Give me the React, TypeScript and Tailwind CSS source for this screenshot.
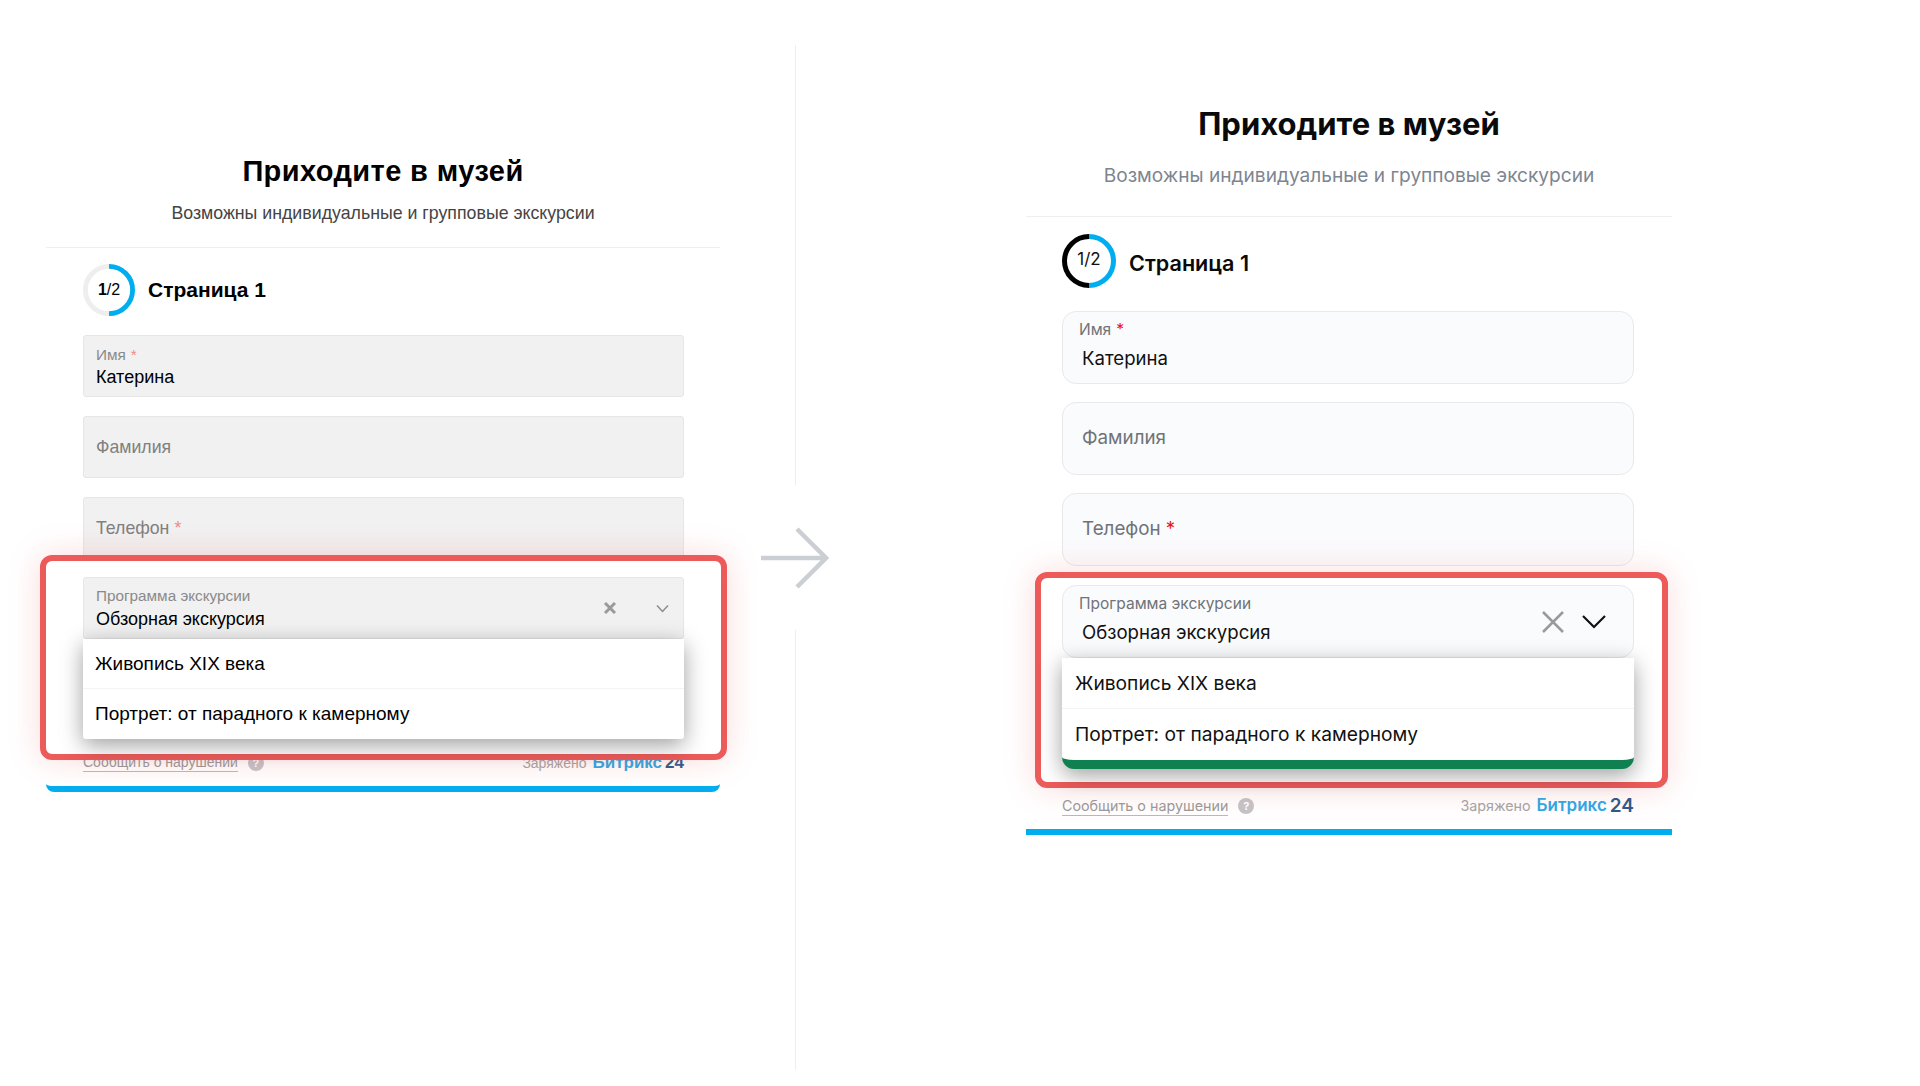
import type { ReactNode } from 'react'

const LEFT_FONT = 'font-["Liberation_Sans",Arial,sans-serif]'

function Ring({ track, size = 54 }: { track: string; size?: number }) {
  return (
    <svg width={size} height={size} viewBox="0 0 54 54" fill="none" className="shrink-0">
      <path d="M27 2.5a24.5 24.5 0 0 0 0 49" stroke={track} strokeWidth="5" />
      <path d="M27 2.5a24.5 24.5 0 0 1 0 49" stroke="#00aeef" strokeWidth="5" />
    </svg>
  )
}

function Star({ color }: { color: string }) {
  return <span className={`ml-[5px] ${color}`}>*</span>
}

function OldField({ label, value, star, className }: { label: string; value?: string; star?: boolean; className?: string }) {
  return (
    <div className={`h-[62px] rounded-[3px] border border-[#e6e6e6] bg-[#f1f1f1] pl-3 ${className ?? ''}`}>
      {value ? (
        <div className="flex h-full flex-col pt-[11px]">
          <div className="text-[15.3px] leading-[16px] text-[#8a8a8a]">
            {label}
            {star && <Star color="text-[#f08a8a]" />}
          </div>
          <div className="mt-[1px] text-[18px] leading-[26px] text-black">{value}</div>
        </div>
      ) : (
        <div className="flex h-full items-center text-[17.7px] text-[#808080]">
          <span>
            {label}
            {star && <Star color="text-[#f08a8a]" />}
          </span>
        </div>
      )}
    </div>
  )
}

function NewField({ label, value, star }: { label: string; value?: string; star?: boolean }) {
  return (
    <div className="h-[73px] rounded-[14px] border border-[#e8e9ed] bg-[#fafbfd] pl-4">
      {value ? (
        <div className="flex h-full flex-col pt-[8px]">
          <div className="text-[15.5px] leading-[20px] text-[#6f7378]">
            {label}
            {star && <Star color="text-[#f01010]" />}
          </div>
          <div className="mt-[6px] pl-[3px] text-[18.6px] leading-[24px] text-[#111]">{value}</div>
        </div>
      ) : (
        <div className="flex h-full items-center pl-[3px] text-[18.8px] text-[#6f7378]">
          <span>
            {label}
            {star && <Star color="text-[#f01010]" />}
          </span>
        </div>
      )}
    </div>
  )
}

function RedBox({ className, children }: { className: string; children: ReactNode }) {
  return (
    <div className={`relative z-10 rounded-[12px] border-[6px] border-[#ed5a5a] bg-white shadow-[0_0_32px_rgba(237,90,90,0.22)] ${className}`}>
      {children}
    </div>
  )
}

function HelpDot({ size }: { size: string }) {
  return (
    <span className={`flex items-center justify-center rounded-full bg-[#c4c4c8] font-bold text-white ${size}`}>?</span>
  )
}

function OldCard() {
  return (
    <div className={`w-[674px] ${LEFT_FONT}`}>
      <div className="rounded-b-[8px] border-b-[6px] border-[#00aeef] pb-[13px]">
        <div className="border-b border-[#efefef] pb-[22px] pt-[153px] text-center">
          <h1 className="text-[29px] font-bold leading-[36px] tracking-[0.4px] text-black">Приходите в музей</h1>
          <p className="mt-[12px] text-[17.75px] leading-[24px] text-[#444]">Возможны индивидуальные и групповые экскурсии</p>
        </div>
        <div className="pl-[37px] pr-[36px] pt-[15px]">
          <div className="flex h-[54px] items-center gap-[13px]">
            <div className="relative">
              <Ring track="#eeeeee" size={52} />
              <span className="absolute inset-0 flex items-center justify-center text-[16px] text-black">
                <b className="font-bold">1</b>/2
              </span>
            </div>
            <span className="text-[21px] font-bold text-black">Страница 1</span>
          </div>
          <div className="mt-[18px] flex flex-col gap-[19px]">
            <OldField label="Имя" value="Катерина" star />
            <OldField label="Фамилия" />
            <OldField label="Телефон" star />
          </div>
          <RedBox className="-mx-[43px] -mt-[4px] px-[37px] pb-[15px] pt-[16px]">
            <div className="flex h-[62px] items-center rounded-[3px] border border-[#e6e6e6] bg-[#f1f1f1] pl-3 pr-[14px]">
              <div className="flex-1">
                <div className="mt-[3px] text-[15.3px] leading-[16px] text-[#8a8a8a]">Программа экскурсии</div>
                <div className="mt-[2px] text-[18px] leading-[26px] text-black">Обзорная экскурсия</div>
              </div>
              <svg width="12" height="12" viewBox="0 0 12 12" className="mr-[40px]" stroke="#9a9a9a" strokeWidth="3">
                <path d="M1 1l10 10M11 1L1 11" />
              </svg>
              <svg width="13" height="9" viewBox="0 0 13 9" fill="none" stroke="#8c8c8c" strokeWidth="1.5">
                <path d="M1 1.5l5.5 6 5.5-6" />
              </svg>
            </div>
            <div className="relative rounded-b-[3px] bg-white shadow-[0_6px_22px_rgba(0,0,0,0.38)]">
              <div className="flex h-[50px] items-center border-b border-[#f4f4f4] pl-3 pt-[1px] text-[19px] text-black">Живопись XIX века</div>
              <div className="flex h-[50px] items-center pl-3 text-[19px] text-black">Портрет: от парадного к камерному</div>
            </div>
          </RedBox>
          <div className="-mt-[7px] flex h-[20px] items-center text-[14px]">
            <span className="border-b border-[#b9b9b9] leading-[17px] text-[#9a9a9a]">Сообщить о нарушении</span>
            <span className="ml-[10px]"><HelpDot size="h-[16px] w-[16px] text-[11px]" /></span>
            <span className="ml-auto text-[#a5a5a5]">Заряжено</span>
            <span className="ml-[6px] text-[17px] font-bold text-[#2fa8e6]">Битрикс</span>
            <span className="ml-[3px] text-[17px] font-bold text-[#2b5a8c]">24</span>
          </div>
        </div>
      </div>
    </div>
  )
}

function NewCard() {
  return (
    <div className="w-[646px] font-['Inter',sans-serif]">
      <div className="border-b-[6px] border-[#00aeef] pb-[13px]">
        <div className="border-b border-[#efefef] pb-[29px] pt-[106px] text-center">
          <h1 className="text-[31px] font-bold leading-[36px] text-[#0a0a0a]">Приходите в музей</h1>
          <p className="mt-[21px] text-[19.1px] leading-[24px] text-[#7d8590]">Возможны индивидуальные и групповые экскурсии</p>
        </div>
        <div className="pl-[36px] pr-[38px] pt-[17px]">
          <div className="flex items-center gap-[13px]">
            <div className="relative">
              <Ring track="#000000" />
              <span className="absolute inset-0 flex items-center justify-center pb-[3px] text-[17px] text-[#111]">1/2</span>
            </div>
            <span className="pt-[5px] text-[21.6px] font-semibold text-[#0a0a0a]">Страница 1</span>
          </div>
          <div className="mt-[23px] flex flex-col gap-[18px]">
            <NewField label="Имя" value="Катерина" star />
            <NewField label="Фамилия" />
            <NewField label="Телефон" star />
          </div>
          <RedBox className="-ml-[27px] -mr-[34px] mt-[6px] pb-[13px] pl-[21px] pr-[28px] pt-[7px]">
            <div className="flex h-[73px] items-center rounded-[14px] border border-[#e8e9ed] bg-[#fafbfd] pl-4 pr-[27px]">
              <div className="-mt-[5px] flex-1">
                <div className="text-[15.5px] leading-[20px] text-[#6f7378]">Программа экскурсии</div>
                <div className="mt-[6px] pl-[3px] text-[18.6px] leading-[24px] text-[#111]">Обзорная экскурсия</div>
              </div>
              <svg width="24" height="24" viewBox="0 0 24 24" className="mr-[17px]" stroke="#9a9a9a" strokeWidth="2.5">
                <path d="M2 2l20 20M22 2L2 22" />
              </svg>
              <svg width="24" height="15" viewBox="0 0 24 15" fill="none" stroke="#111" strokeWidth="2.2">
                <path d="M1 2l11 11L23 2" />
              </svg>
            </div>
            <div className="relative overflow-hidden rounded-b-[12px] border-b-[9px] border-[#0f8050] bg-white shadow-[0_6px_22px_rgba(0,0,0,0.38)]">
              <div className="flex h-[51px] items-center border-b border-[#f4f4f4] pl-[13px] text-[19.2px] text-[#111]">Живопись XIX века</div>
              <div className="flex h-[51px] items-center pl-[13px] text-[19.2px] text-[#111]">Портрет: от парадного к камерному</div>
            </div>
          </RedBox>
          <div className="mt-[8px] flex h-[20px] items-center text-[14.3px]">
            <span className="border-b border-[#b9b9b9] leading-[18px] text-[#9a9a9a]">Сообщить о нарушении</span>
            <span className="ml-[10px]"><HelpDot size="h-[16px] w-[16px] text-[11px]" /></span>
            <span className="ml-auto text-[#a5a5a5]">Заряжено</span>
            <span className="ml-[6px] text-[17px] font-semibold text-[#2fa8e6]">Битрикс</span>
            <span className="ml-[3px] text-[19px] font-semibold text-[#2b5a8c]">24</span>
          </div>
        </div>
      </div>
    </div>
  )
}

export default function App() {
  return (
    <div className="flex h-[1086px] w-[1920px] overflow-hidden bg-white">
      <div className="w-[795px] shrink-0 pl-[46px]">
        <OldCard />
      </div>
      {/* Divider with arrow */}
      <div className="relative flex w-px shrink-0 flex-col pb-[16px] pt-[45px]">
        <div className="h-[440px] w-px bg-[#eeeeee]" />
        <div className="flex-1" />
        <div className="h-[440px] w-px bg-[#eeeeee]" />
        <svg width="68" height="62" viewBox="0 0 68 62" fill="none" stroke="#cbced2" strokeWidth="4.5" className="absolute left-[-34px] top-[527px]">
          <path d="M0 31h64M36 2l29 29-29 29" />
        </svg>
      </div>
      <div className="flex-1 pl-[230px]">
        <NewCard />
      </div>
    </div>
  )
}
